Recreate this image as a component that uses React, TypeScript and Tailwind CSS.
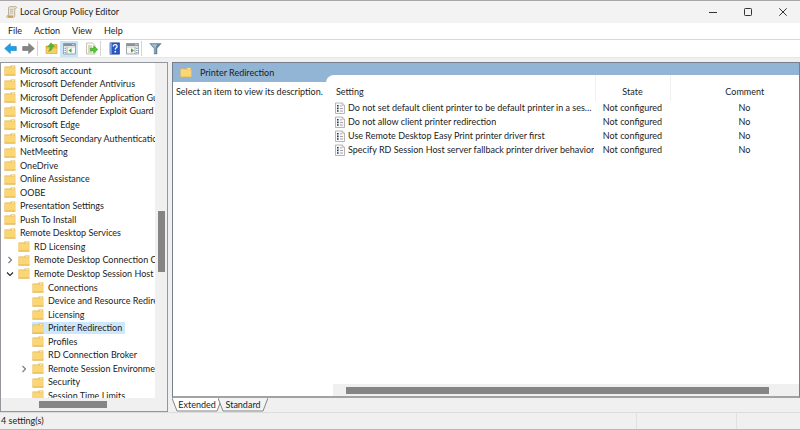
import { useState } from "react";
import type { ReactNode } from "react";
import clsx from "clsx";

type TreeItem = {
  name: string;
  level: 0 | 1 | 2;
  state?: "open" | "closed";
};

const TREE: TreeItem[] = [
  { name: "Microsoft account", level: 0 },
  { name: "Microsoft Defender Antivirus", level: 0 },
  { name: "Microsoft Defender Application Guard", level: 0 },
  { name: "Microsoft Defender Exploit Guard", level: 0 },
  { name: "Microsoft Edge", level: 0 },
  { name: "Microsoft Secondary Authentication Factor", level: 0 },
  { name: "NetMeeting", level: 0 },
  { name: "OneDrive", level: 0 },
  { name: "Online Assistance", level: 0 },
  { name: "OOBE", level: 0 },
  { name: "Presentation Settings", level: 0 },
  { name: "Push To Install", level: 0 },
  { name: "Remote Desktop Services", level: 0 },
  { name: "RD Licensing", level: 1 },
  { name: "Remote Desktop Connection Client", level: 1, state: "closed" },
  { name: "Remote Desktop Session Host", level: 1, state: "open" },
  { name: "Connections", level: 2 },
  { name: "Device and Resource Redirection", level: 2 },
  { name: "Licensing", level: 2 },
  { name: "Printer Redirection", level: 2 },
  { name: "Profiles", level: 2 },
  { name: "RD Connection Broker", level: 2 },
  { name: "Remote Session Environment", level: 2, state: "closed" },
  { name: "Security", level: 2 },
  { name: "Session Time Limits", level: 2 },
];

const SETTINGS = [
  "Do not set default client printer to be default printer in a session",
  "Do not allow client printer redirection",
  "Use Remote Desktop Easy Print printer driver first",
  "Specify RD Session Host server fallback printer driver behavior",
];

export default function App() {
  const [selected, setSelected] = useState("Printer Redirection");
  const [tab, setTab] = useState("Extended");

  return (
    <div className="flex h-screen flex-col overflow-hidden border-y border-t-[#aaa6a8] border-b-[#b9b5c8] bg-[#f0f0f0] font-[Lato,'Open_Sans',sans-serif] text-[9px] leading-3 text-[#1c1c1c]">
      <TitleBar />
      <nav className="flex h-[17px] shrink-0 items-center gap-3 border-b border-[#d8d8d8] bg-white pl-2">
        {["File", "Action", "View", "Help"].map((item) => (
          <button key={item} type="button">
            {item}
          </button>
        ))}
      </nav>
      <Toolbar />

      <main className="flex min-h-0 flex-1 gap-1 pt-1">
        <Tree selected={selected} onSelect={setSelected} />
        <section className="flex min-w-0 flex-1 flex-col">
          <DetailPane title={selected} />
          <Tabs tab={tab} onChange={setTab} />
        </section>
      </main>

      <footer className="flex h-[17px] shrink-0 items-center border-t border-[#dcdcdc]">
        <span className="flex-1 pl-px">4 setting(s)</span>
        <span className="h-full w-[100px] border-l border-[#e2e2e2]" />
        <span className="h-full w-16 border-l border-[#e2e2e2]" />
      </footer>
    </div>
  );
}

function TitleBar() {
  return (
    <header className="flex h-[22px] shrink-0 items-center bg-[#f3f3f3] pl-[6px]">
      <ScrollIcon />
      <h1 className="flex-1 pl-[3px]">Local Group Policy Editor</h1>
      <button type="button" aria-label="Minimize" className="flex h-full w-[35px] items-center justify-center">
        <svg width="8" height="8" viewBox="0 0 8 8" stroke="#333">
          <path d="M0 4.5h8" />
        </svg>
      </button>
      <button type="button" aria-label="Maximize" className="flex h-full w-[35px] items-center justify-center">
        <svg width="8" height="8" viewBox="0 0 8 8" fill="none" stroke="#333">
          <rect x=".5" y=".5" width="7" height="7" rx=".8" />
        </svg>
      </button>
      <button type="button" aria-label="Close" className="flex h-full w-[35px] items-center justify-center">
        <svg width="8" height="8" viewBox="0 0 8 8" stroke="#333">
          <path d="M.3.3l7.4 7.4M7.7.3L.3 7.7" />
        </svg>
      </button>
    </header>
  );
}

function Toolbar() {
  return (
    <div className="flex h-[18px] shrink-0 items-center border-b border-[#e4e7ea] bg-white pl-px">
      <ToolButton label="Back">
        <Arrow color="#1ba1e6" edge="#1583c4" />
      </ToolButton>
      <ToolButton label="Forward">
        <g transform="matrix(-1 0 0 1 13 0)">
          <Arrow color="#858585" edge="#6d6d6d" />
        </g>
      </ToolButton>
      <Divider />
      <ToolButton label="Up one level">
        <path d="M1 4h5l1-1.500h5v9H1z" fill="#e9b93f" stroke="#c99a2b" strokeWidth=".6" />
        <path d="M1.300 6.500h10.400v4.800H1.300z" fill="#f3d06a" />
        <path d="M3.500 9.300C6.500 9 7.500 7.200 7.400 4.600h1.900L6 .8 3 4.600h2.200c0 1.800-.4 3.200-1.700 4.700z" fill="#4cbb2e" stroke="#2f9419" strokeWidth=".4" />
      </ToolButton>
      <ToolButton label="Show/Hide Console Tree" active>
        <ConsoleIcon />
      </ToolButton>
      <div className="flex pl-1">
        <ToolButton label="Export List">
          <path d="M1.500 1h6l2.500 2.500V12H1.500z" fill="#fffdf2" stroke="#b5ab8c" strokeWidth=".7" />
          <path d="M3 4h4M3 6h3M3 8h3M3 10h4" stroke="#8e8e8e" strokeWidth=".7" />
          <path d="M5.500 6h3.200V3.800L12.800 7.500l-4.100 3.700V9H5.500z" fill="#56c735" stroke="#359b1c" strokeWidth=".5" />
        </ToolButton>
      </div>
      <Divider />
      <ToolButton label="Help">
        <path d="M2 .8h9.500v11.400H2z" fill="#2a57bf" stroke="#173a8e" strokeWidth=".6" />
        <path d="M2 .8h1.800v11.400H2z" fill="#7c9ce0" />
        <path d="M5.300 4.600c0-1.300.8-1.900 1.900-1.900s1.900.6 1.900 1.700c0 1.400-1.800 1.500-1.800 3.100" fill="none" stroke="#fff" strokeWidth="1.300" />
        <circle cx="7.300" cy="9.700" r=".9" fill="#fff" />
      </ToolButton>
      <ToolButton label="Show/Hide Action Pane">
        <ConsoleIcon flip />
      </ToolButton>
      <Divider />
      <ToolButton label="Filter">
        <path d="M.8 1.500h11.400L8 6.500V12H5.200V6.500z" fill="#64869c" stroke="#5b7d92" strokeWidth=".5" />
        <path d="M2.300 2.200h6L6.500 5.800v5.500h-.8V6.200z" fill="#a5bfce" />
      </ToolButton>
    </div>
  );
}

function ToolButton({ label, active, children }: { label: string; active?: boolean; children: ReactNode }) {
  return (
    <button
      type="button"
      aria-label={label}
      className={clsx("flex h-4 w-[18px] items-center justify-center", active && "bg-[#cce5f6]")}
    >
      <svg width="13" height="13" viewBox="0 0 13 13">
        {children}
      </svg>
    </button>
  );
}

function Arrow({ color, edge }: { color: string; edge: string }) {
  return <path d="M.7 6.500L6.300 1.500v3h6v4h-6v3z" fill={color} stroke={edge} strokeWidth=".6" strokeLinejoin="round" />;
}

function ConsoleIcon({ flip }: { flip?: boolean }) {
  return (
    <>
      <path d="M.5 1.500h12v10.500H.5z" fill="#f7f7f5" stroke="#909598" strokeWidth=".8" />
      <path d="M.5 1.500h12v2.500H.5z" fill="#8794a0" />
      <path d="M9 2.700h2.500" stroke="#e4e9ee" strokeWidth=".8" />
      <path d="M.8 5h11.400" stroke="#bcc2c6" strokeWidth=".7" />
      <path d={flip ? "M9 5v7" : "M4 5v7"} stroke="#909598" strokeWidth=".7" />
      <path d={flip ? "M10 6.500h1.600M10 8.500h1.600M10 10.500h1.600" : "M1.500 6.500h1.600M1.500 8.500h1.600M1.500 10.500h1.600"} stroke="#6f8fae" strokeWidth=".8" />
      <path d={flip ? "M5 6.300l3 2.200-3 2.200z" : "M8.500 6.300l-3 2.200 3 2.200z"} fill="#3fae2a" />
    </>
  );
}

function Divider() {
  return <span className="mr-1 h-[15px] w-px bg-[#d4d4d4]" />;
}

function Tree({ selected, onSelect }: { selected: string; onSelect: (name: string) => void }) {
  return (
    <aside className="flex w-[21%] shrink-0 flex-col border border-[#93979c] bg-[#f0f0f0]">
      <div className="flex min-h-0 flex-1">
        <ul className="flex min-w-0 flex-1 flex-col overflow-hidden bg-white pt-px">
          {TREE.map((item) => (
            <li
              key={item.name}
              className={clsx(
                "flex shrink-0 basis-[4.06%] items-center pl-[3px]",
                item.level === 1 && "pl-[17px]",
                item.level === 2 && "pl-[31px]",
              )}
            >
              {item.state && (
                <svg
                  width="8"
                  height="8"
                  viewBox="0 0 8 8"
                  className="-ml-3 mr-1 shrink-0"
                  fill="none"
                  stroke={item.state === "open" ? "#222" : "#777"}
                  strokeWidth="1.1"
                >
                  <path d={item.state === "open" ? "M1 2.500l3 3 3-3" : "M2.500 1l3 3-3 3"} />
                </svg>
              )}
              <button
                type="button"
                onClick={() => onSelect(item.name)}
                className={clsx(
                  "flex items-center gap-1 whitespace-nowrap pr-[3px]",
                  item.name === selected && "bg-[#cce8ff]",
                )}
              >
                <FolderIcon />
                {item.name}
              </button>
            </li>
          ))}
        </ul>
        <div className="flex w-3 shrink-0 flex-col items-center">
          <div className="flex-[148]" />
          <div className="w-[7px] flex-[61] bg-[#858585]" />
          <div className="flex-[126]" />
        </div>
      </div>
      <div className="flex h-[13px] shrink-0 items-center">
        <div className="flex-[38]" />
        <div className="h-[7px] flex-[68] bg-[#858585]" />
        <div className="flex-[60]" />
      </div>
    </aside>
  );
}

function DetailPane({ title }: { title: string }) {
  return (
    <div className="flex min-h-0 flex-1 flex-col border border-b-2 border-[#75808c] border-b-[#a2a2a2] bg-[#92b4d5]">
      <div className="flex min-h-0 flex-1">
        <div className="flex w-[153px] shrink-0 flex-col">
          <h2 className="flex h-[19px] items-center gap-2 pl-[7px]">
            <FolderIcon />
            {title}
          </h2>
          <p className="flex-1 whitespace-nowrap bg-white pl-[3px] pt-1">Select an item to view its description.</p>
        </div>
        <div className="flex min-w-0 flex-1 flex-col pt-3">
          <div className="flex flex-1 flex-col justify-between rounded-tl-lg bg-white pl-[7px]">
            <table className="w-full table-fixed">
              <thead>
                <tr className="h-[26px]">
                  <th className="w-[262px] pl-[3px] pt-2 text-left font-normal">Setting</th>
                  <th className="w-[75px] border-x border-[#f0f0f0] pt-2 font-normal">State</th>
                  <th className="pl-5 pt-2 font-normal">Comment</th>
                </tr>
              </thead>
              <tbody>
                {SETTINGS.map((name) => (
                  <tr key={name} className="h-[14px]">
                    <td className="p-0 pl-[2px]">
                      <div className="flex items-center gap-[3px]">
                        <SettingIcon />
                        <span className="truncate">{name}</span>
                      </div>
                    </td>
                    <td className="whitespace-nowrap p-0 text-center">Not configured</td>
                    <td className="p-0 pl-5 text-center">No</td>
                  </tr>
                ))}
              </tbody>
            </table>
            <div className="flex h-3 items-center bg-[#f0f0f0]">
              <div className="flex-[13]" />
              <div className="h-[7px] flex-[424] bg-[#858585]" />
              <div className="flex-[30]" />
            </div>
          </div>
        </div>
      </div>
    </div>
  );
}

function Tabs({ tab, onChange }: { tab: string; onChange: (tab: string) => void }) {
  return (
    <div className="flex h-[14px] shrink-0" role="tablist">
      {["Extended", "Standard"].map((name) => (
        <button
          key={name}
          type="button"
          role="tab"
          aria-selected={tab === name}
          onClick={() => onChange(name)}
          className="relative -mr-1 h-[14px] w-[50px]"
        >
          <svg
            viewBox="0 0 50 14"
            preserveAspectRatio="none"
            className="absolute inset-0 h-full w-full"
            fill={tab === name ? "#fff" : "#f3f3f3"}
            stroke="#858585"
          >
            <path d="M0 0l5 13h40l5-13" />
          </svg>
          <span className="relative">{name}</span>
        </button>
      ))}
    </div>
  );
}

function FolderIcon() {
  return (
    <svg width="12" height="11" viewBox="0 0 12 11" className="shrink-0">
      <path d="M.5 1.500h6V.6h4.800v9.800H.5z" fill="#e3b44d" />
      <path d="M7.500 1.200h3v1.300h-3z" fill="#fff0c0" />
      <path d="M.7 2.300h6l1 .8h3.600v7H.7z" fill="#fad674" />
      <path d="M.5 10h11" stroke="#dcaa46" strokeWidth=".7" />
    </svg>
  );
}

function SettingIcon() {
  return (
    <svg width="10" height="12" viewBox="0 0 10 12" className="shrink-0">
      <path d="M.5 1h6.800l2.200 2.200V11.500h-9z" fill="#fafafa" stroke="#a3a3a3" strokeWidth=".8" />
      <path d="M7.200 1v2.300h2.300" fill="none" stroke="#a3a3a3" strokeWidth=".6" />
      <path d="M2 3h1.600v1.600H2zM2 5.600h1.600v1.600H2zM2 8.200h1.600v1.600H2z" fill="#2f2f4a" />
      <path d="M5 3.900h1.800M5 6.500h3M5 9h3" stroke="#8c8c9c" strokeWidth=".8" />
    </svg>
  );
}

function ScrollIcon() {
  return (
    <svg width="11" height="12" viewBox="0 0 11 12" className="shrink-0">
      <path d="M2.500 1.500C3 .7 4 .6 5 .6h4.500c1.300 0 1.300 2 0 2H8.700v7.200c0 1-.7 1.700-1.700 1.700H1.800c-1.500 0-1.500-2 0-2h.7z" fill="#ece3cf" stroke="#a39a86" strokeWidth=".7" />
      <path d="M2 9.500h5v1.600H2z" fill="#c8a25a" />
      <path d="M4 3.500h3M4 5.200h3M4 7h3" stroke="#aaa18e" strokeWidth=".6" />
    </svg>
  );
}
